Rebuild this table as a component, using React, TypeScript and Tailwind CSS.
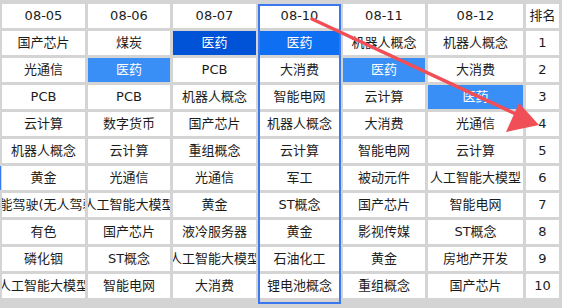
import React from "react";

type Cell = { text: string; tone?: "dark" | "mid" | "light" };

const header = ["08-05", "08-06", "08-07", "08-10", "08-11", "08-12", "排名"];

const rows: Cell[][] = [
  [{ text: "国产芯片" }, { text: "煤炭" }, { text: "医药", tone: "dark" }, { text: "医药", tone: "mid" }, { text: "机器人概念" }, { text: "机器人概念" }],
  [{ text: "光通信" }, { text: "医药", tone: "light" }, { text: "PCB" }, { text: "大消费" }, { text: "医药", tone: "light" }, { text: "大消费" }],
  [{ text: "PCB" }, { text: "PCB" }, { text: "机器人概念" }, { text: "智能电网" }, { text: "云计算" }, { text: "医药", tone: "light" }],
  [{ text: "云计算" }, { text: "数字货币" }, { text: "国产芯片" }, { text: "机器人概念" }, { text: "大消费" }, { text: "光通信" }],
  [{ text: "机器人概念" }, { text: "云计算" }, { text: "重组概念" }, { text: "云计算" }, { text: "智能电网" }, { text: "云计算" }],
  [{ text: "黄金" }, { text: "光通信" }, { text: "光通信" }, { text: "军工" }, { text: "被动元件" }, { text: "人工智能大模型" }],
  [{ text: "智能驾驶(无人驾驶)" }, { text: "人工智能大模型" }, { text: "黄金" }, { text: "ST概念" }, { text: "国产芯片" }, { text: "智能电网" }],
  [{ text: "有色" }, { text: "国产芯片" }, { text: "液冷服务器" }, { text: "黄金" }, { text: "影视传媒" }, { text: "ST概念" }],
  [{ text: "磷化铟" }, { text: "ST概念" }, { text: "人工智能大模型" }, { text: "石油化工" }, { text: "黄金" }, { text: "房地产开发" }],
  [{ text: "人工智能大模型" }, { text: "智能电网" }, { text: "大消费" }, { text: "锂电池概念" }, { text: "重组概念" }, { text: "国产芯片" }],
];

const toneClass = (tone?: Cell["tone"]) => {
  if (tone === "dark") return "bg-[#0052d6] text-white";
  if (tone === "mid") return "bg-[#0f6ff2] text-white";
  if (tone === "light") return "bg-[#3a8ff6] text-white";
  return "bg-white text-[#1c1c1c]";
};

const App = () => {
  return (
    <div
      className="relative w-[562px] h-[308px] bg-[#d4d4d4] overflow-hidden text-[13px]"
      style={{ fontFamily: '"DejaVu Sans", "Noto Sans CJK SC", sans-serif' }}
    >
      <div className="grid grid-cols-[83px_82px_83px_81px_82px_95px_33px] auto-rows-[24px] gap-[3px] pl-[2px] pt-[4px]">
        {header.map((h, i) => (
          <div key={"h" + i} className="bg-white text-[#1c1c1c] flex items-center justify-center overflow-hidden whitespace-nowrap">
            {h}
          </div>
        ))}
        {rows.map((row, r) => (
          <React.Fragment key={r}>
            {row.map((c, i) => (
              <div
                key={i}
                className={`${toneClass(c.tone)} flex items-center justify-center overflow-hidden whitespace-nowrap`}
              >
                {c.text}
              </div>
            ))}
            <div className="bg-white text-[#1c1c1c] flex items-center justify-center">{r + 1}</div>
          </React.Fragment>
        ))}
      </div>

      {/* stray selection mark */}
      <div className="absolute left-0 top-[166px] w-[1px] h-[24px] bg-[#3a7cf0]"></div>

      {/* annotations */}
      <svg className="absolute inset-0 pointer-events-none" width="562" height="308" viewBox="0 0 562 308">
        <rect x="259" y="5" width="81" height="298" fill="none" stroke="#3b78ee" strokeWidth="2" />
        <line x1="312" y1="19" x2="518" y2="115" stroke="#f04f57" strokeWidth="3.5" strokeLinecap="round" />
        <polygon points="539,125 519,103 506,132" fill="#f04f57" />
      </svg>
    </div>
  );
};

export default App;
